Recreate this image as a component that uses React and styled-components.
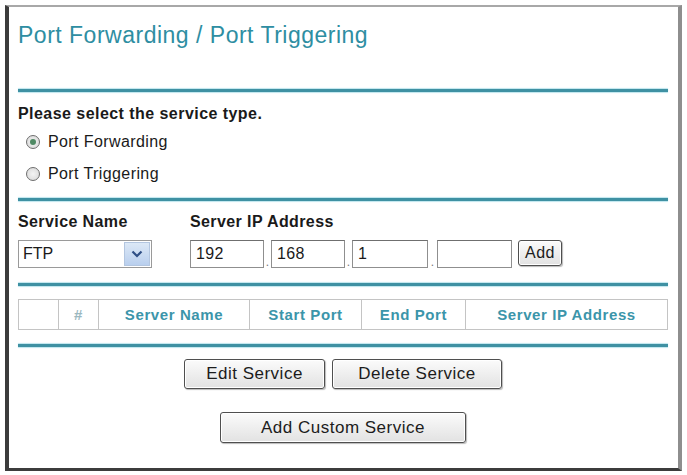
import React from 'react';
import styled, { createGlobalStyle } from 'styled-components';

const GlobalStyle = createGlobalStyle`
    html, body {
        margin: 0;
        padding: 0;
        background: #ffffff;
    }
    body {
        font-family: "Liberation Sans", Arial, sans-serif;
        color: #1a1a1a;
    }
`;

const Frame = styled.div`
    margin: 5px 0 0 5px;
    width: 677px;
    height: 466px;
    box-sizing: border-box;
    background: #ffffff;
    border-top: 2px solid #a8a8a8;
    border-left: 4px solid #3c3c3c;
    border-right: 4px solid #8e8e8e;
    border-bottom: 3px solid #3c3c3c;
    padding: 0 10px 0 9px;
    display: flex;
    flex-direction: column;
`;

const Title = styled.h1`
    margin: 14px 0 0 0;
    height: 28px;
    line-height: 28px;
    font-size: 23px;
    font-weight: normal;
    letter-spacing: 0.5px;
    color: #2e8ea2;
`;

const Divider = styled.div`
    height: 3px;
    margin-top: ${(p) => p.$top}px;
    background: #3f91a3;
    box-shadow: 0 -1px 1px #bfe6ee, 0 1px 1px #bfe6ee;
`;

const Heading = styled.div`
    margin-top: 10px;
    height: 24px;
    line-height: 24px;
    font-size: 16px;
    font-weight: bold;
    letter-spacing: 0.45px;
`;

const RadioRow = styled.label`
    height: 32px;
    display: flex;
    align-items: center;
    padding-left: 8px;
    gap: 8px;
    font-size: 16px;
    letter-spacing: 0.4px;
`;

const RadioDot = styled.span`
    width: 12px;
    height: 12px;
    border-radius: 50%;
    border: 1px solid #6e6e6e;
    background: radial-gradient(circle, #f4f4f4 0%, #d6d6d6 100%);
    display: flex;
    align-items: center;
    justify-content: center;
    &::after {
        content: '';
        width: 6px;
        height: 6px;
        border-radius: 50%;
        background: ${(p) => (p.$checked ? '#4f8a64' : 'transparent')};
    }
`;

const FieldGrid = styled.div`
    display: grid;
    grid-template-columns: 172px 1fr;
    grid-template-rows: 24px 28px;
    row-gap: 6px;
    margin-top: 9px;
`;

const FieldLabel = styled.div`
    line-height: 24px;
    font-size: 16px;
    font-weight: bold;
    letter-spacing: 0.4px;
`;

const Select = styled.div`
    width: 134px;
    height: 28px;
    box-sizing: border-box;
    border: 1px solid #9a9a9a;
    display: flex;
    align-items: stretch;
    font-size: 16px;
`;

const SelectValue = styled.div`
    flex: 1;
    padding-left: 4px;
    line-height: 26px;
`;

const SelectArrow = styled.div`
    width: 24px;
    margin: 1px;
    background: linear-gradient(#dce8f6, #b9cfee);
    border: 1px solid #b3c6e0;
    display: flex;
    align-items: center;
    justify-content: center;
`;

const IpRow = styled.div`
    display: flex;
    align-items: stretch;
`;

const IpBox = styled.div`
    width: ${(p) => p.$w}px;
    height: 28px;
    box-sizing: border-box;
    border: 1px solid #8f8f8f;
    border-top-color: #6f6f6f;
    padding-left: 5px;
    line-height: 26px;
    font-size: 16px;
    letter-spacing: 0.3px;
`;

const IpDot = styled.div`
    width: ${(p) => p.$w}px;
    display: flex;
    align-items: flex-end;
    justify-content: center;
    font-size: 12px;
    line-height: 12px;
    color: #777;
`;

const Button = styled.button`
    width: ${(p) => p.$w}px;
    height: ${(p) => p.$h}px;
    padding: 0;
    font-family: "Liberation Sans", Arial, sans-serif;
    font-size: ${(p) => p.$fs || 17}px;
    letter-spacing: 0.5px;
    color: #1c1c1c;
    background: linear-gradient(#fbfbfb, #e2e2e2);
    border: 1px solid #4f4f4f;
    border-radius: 3px;
    box-shadow: inset 0 0 0 1px #ffffff, 1px 1px 1px #bbb;
`;

const Table = styled.div`
    margin-top: 13px;
    height: 29px;
    display: grid;
    grid-template-columns: 39px 40px 151px 112px 104px 1fr;
    border: 1px solid #c4c4c4;
`;

const HeadCell = styled.div`
    border-left: ${(p) => (p.$first ? 'none' : '1px solid #c4c4c4')};
    display: flex;
    align-items: center;
    justify-content: center;
    font-size: 15px;
    font-weight: bold;
    letter-spacing: 0.6px;
    color: ${(p) => (p.$muted ? '#9bb8bf' : '#3b95aa')};
`;

const ButtonRow = styled.div`
    display: flex;
    justify-content: center;
    gap: 7px;
    margin-top: ${(p) => p.$top}px;
`;

const Chevron = () => (
    <svg width="12" height="8" viewBox="0 0 12 8">
        <path d="M1.5 1.5 L6 6 L10.5 1.5" fill="none" stroke="#2f4f86" strokeWidth="2.2" />
    </svg>
);

const columns = ['', '#', 'Server Name', 'Start Port', 'End Port', 'Server IP Address'];

const App = () => {
    return (
        <>
            <GlobalStyle />
            <Frame>
                <Title>Port Forwarding / Port Triggering</Title>
                <Divider $top={40} />

                <Heading>Please select the service type.</Heading>
                <RadioRow>
                    <RadioDot $checked />
                    Port Forwarding
                </RadioRow>
                <RadioRow>
                    <RadioDot />
                    Port Triggering
                </RadioRow>
                <Divider $top={8} />

                <FieldGrid>
                    <FieldLabel>Service Name</FieldLabel>
                    <FieldLabel>Server IP Address</FieldLabel>
                    <Select>
                        <SelectValue>FTP</SelectValue>
                        <SelectArrow>
                            <Chevron />
                        </SelectArrow>
                    </Select>
                    <IpRow>
                        <IpBox $w={74}>192</IpBox>
                        <IpDot $w={7}>.</IpDot>
                        <IpBox $w={74}>168</IpBox>
                        <IpDot $w={7}>.</IpDot>
                        <IpBox $w={76}>1</IpBox>
                        <IpDot $w={9}>.</IpDot>
                        <IpBox $w={75}></IpBox>
                        <IpDot $w={6}></IpDot>
                        <Button $w={44} $h={26} $fs={16}>Add</Button>
                    </IpRow>
                </FieldGrid>
                <Divider $top={15} />

                <Table>
                    {columns.map((c, i) => (
                        <HeadCell key={i} $first={i === 0} $muted={c === '#'}>
                            {c}
                        </HeadCell>
                    ))}
                </Table>
                <Divider $top={14} />

                <ButtonRow $top={12}>
                    <Button $w={141} $h={30}>Edit Service</Button>
                    <Button $w={170} $h={30}>Delete Service</Button>
                </ButtonRow>
                <ButtonRow $top={23}>
                    <Button $w={246} $h={31}>Add Custom Service</Button>
                </ButtonRow>
            </Frame>
        </>
    );
};

export default App;
